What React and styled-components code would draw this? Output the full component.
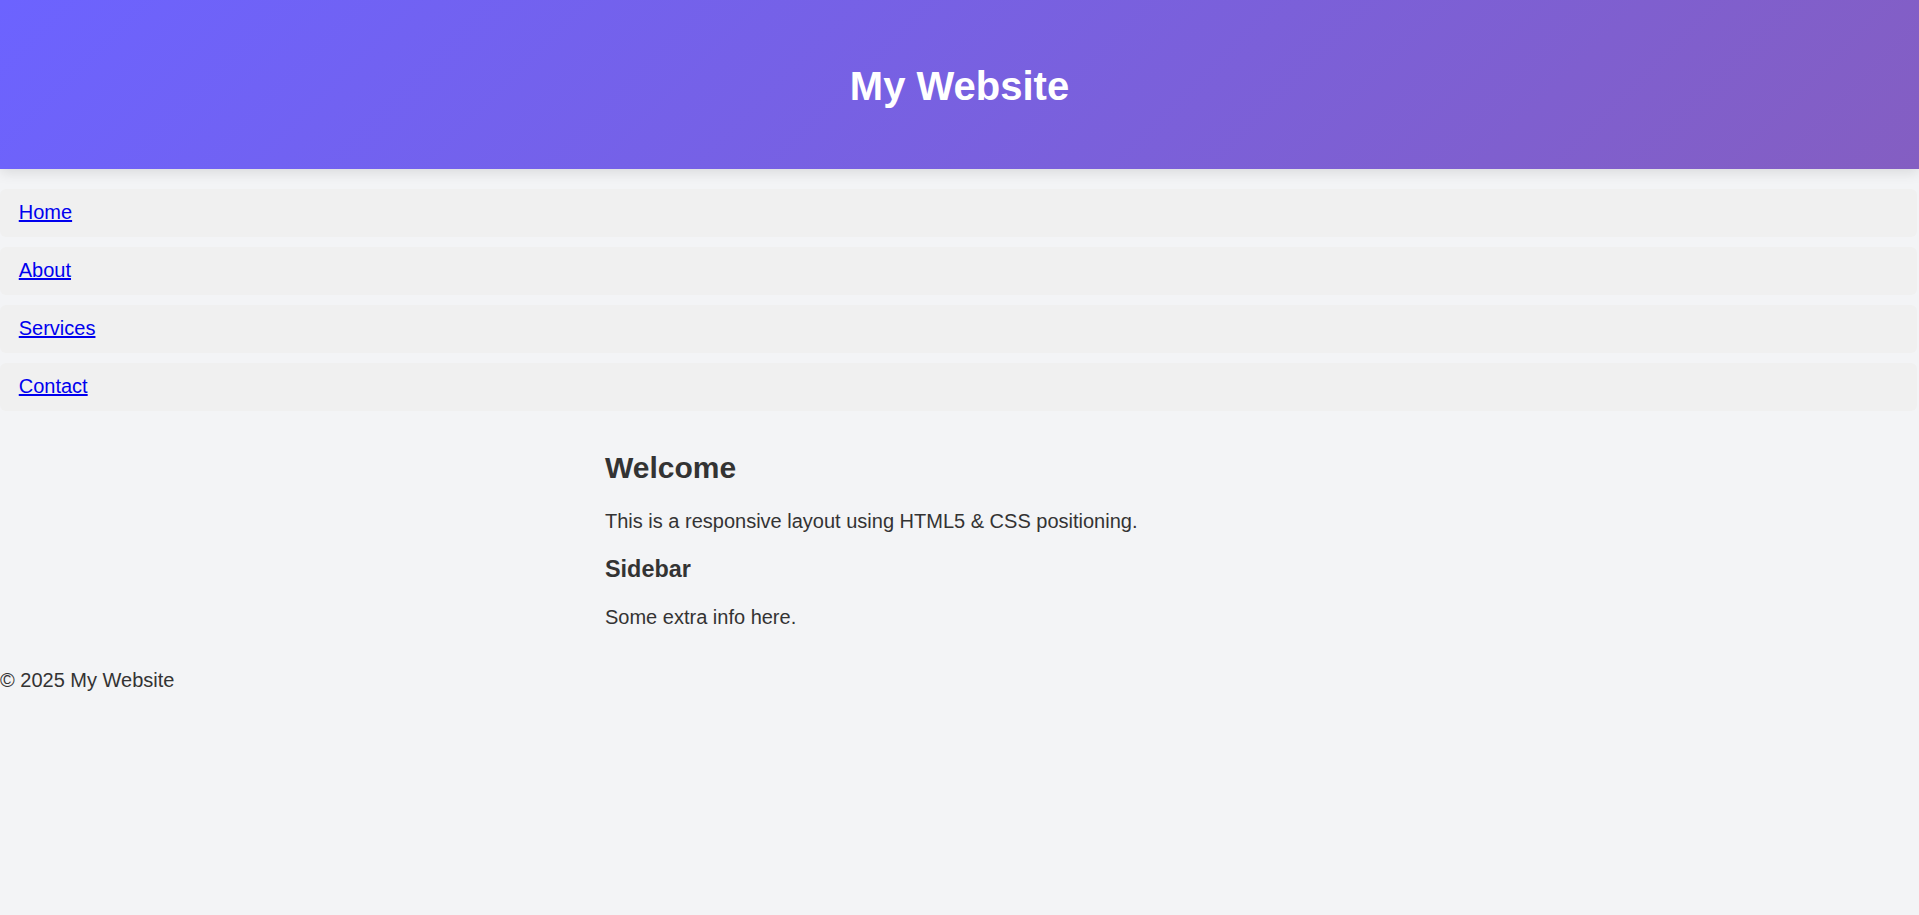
import React from "react";
import styled, { createGlobalStyle } from "styled-components";

const Global = createGlobalStyle`
  html, body { margin: 0; padding: 0; }
  body {
    background: #f3f4f6;
    color: #333;
    font-family: "Liberation Sans", Arial, sans-serif;
    font-size: 20px;
  }
`;

const Header = styled.header`
  background: linear-gradient(135deg, #6c63ff, #845ec2);
  color: #fff;
  text-align: center;
  padding: 63px 0 60px;
  box-shadow: 0 4px 12px rgba(0, 0, 0, 0.1);
  position: relative;
  z-index: 1;
`;

const Title = styled.h1`
  margin: 0;
  font-size: 40px;
  line-height: 46px;
  font-weight: 700;
`;

const NavList = styled.ul`
  list-style: none;
  margin: 20px 2px 0 0;
  padding: 0;
  display: flex;
  flex-direction: column;
  gap: 10px;
`;

const NavItem = styled.li`
  background: #f0f0f0;
  border-radius: 6px;
  padding: 11.5px 18.75px 13.5px;
  line-height: 23px;
`;

const NavLink = styled.a`
  color: #0000ee;
  text-decoration: underline;
  font-size: 20px;
`;

const Main = styled.main`
  margin-left: 605px;
  padding: 15px 0 20px;
`;

const Heading = styled.h2`
  font-size: 30px;
  line-height: 34.5px;
  margin: 24.9px 0;
  font-weight: 700;
`;

const SubHeading = styled.h3`
  font-size: 23.4px;
  line-height: 26.9px;
  margin: 22.5px 0 23.4px;
  font-weight: 700;
`;

const Text = styled.p`
  margin: 20px 0;
  line-height: 23px;
`;

const Footer = styled.footer`
  line-height: 23px;
`;

const links = ["Home", "About", "Services", "Contact"];

export default function App() {
  return (
    <>
      <Global />
      <Header>
        <Title>My Website</Title>
      </Header>
      <nav>
        <NavList>
          {links.map((l) => (
            <NavItem key={l}>
              <NavLink href="#">{l}</NavLink>
            </NavItem>
          ))}
        </NavList>
      </nav>
      <Main>
        <Heading>Welcome</Heading>
        <Text>This is a responsive layout using HTML5 &amp; CSS positioning.</Text>
        <SubHeading>Sidebar</SubHeading>
        <Text>Some extra info here.</Text>
      </Main>
      <Footer>© 2025 My Website</Footer>
    </>
  );
}
